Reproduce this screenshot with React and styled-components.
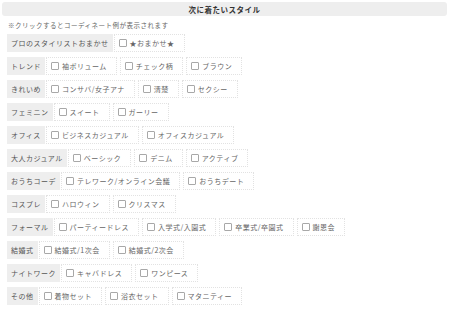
import React from "react";
import styled, { createGlobalStyle } from "styled-components";

const Global = createGlobalStyle`
  body {
    margin: 0;
    background: #fff;
    font-family: "Noto Sans CJK JP", "Noto Sans", sans-serif;
  }
`;

const Page = styled.div`
  padding: 2px 3px 0 2px;
`;

const Title = styled.div`
  height: 14px;
  background: #eeeeee;
  border-radius: 3px;
  display: flex;
  align-items: center;
  justify-content: center;
  font-size: 7.5px;
  font-weight: bold;
  letter-spacing: 0.5px;
  color: #333;
`;

const Note = styled.p`
  margin: 4px 0 0 6px;
  font-size: 6.5px;
  line-height: 10px;
  letter-spacing: 0.5px;
  color: #666;
`;

const List = styled.div`
  display: flex;
  flex-direction: column;
  gap: 5px;
  margin: 4px 0 0 5px;
`;

const Row = styled.div`
  display: flex;
  height: 18px;
  gap: 2px;
`;

const Label = styled.div`
  display: flex;
  align-items: center;
  background: #eeeeee;
  padding: 0 4px;
  margin-right: -1px;
  font-size: 7px;
  letter-spacing: 0.5px;
  color: #555;
  white-space: nowrap;
`;

const Item = styled.label`
  display: flex;
  align-items: center;
  gap: 3px;
  box-sizing: border-box;
  border: 1px dotted #e2e2e2;
  padding: 0 9px 0 4px;
  margin-right: 1px;
  font-size: 7px;
  letter-spacing: 0.5px;
  color: #666;
  white-space: nowrap;
  cursor: pointer;
`;

const Box = styled.span`
  display: inline-block;
  width: 8px;
  height: 8px;
  box-sizing: border-box;
  border: 1px solid #a8a8a8;
  border-radius: 1px;
  background: #fff;
  flex: none;
`;

const data = [
  ["プロのスタイリストおまかせ", ["★おまかせ★"]],
  ["トレンド", ["袖ボリューム", "チェック柄", "ブラウン"]],
  ["きれいめ", ["コンサバ/女子アナ", "清楚", "セクシー"]],
  ["フェミニン", ["スイート", "ガーリー"]],
  ["オフィス", ["ビジネスカジュアル", "オフィスカジュアル"]],
  ["大人カジュアル", ["ベーシック", "デニム", "アクティブ"]],
  ["おうちコーデ", ["テレワーク/オンライン会議", "おうちデート"]],
  ["コスプレ", ["ハロウィン", "クリスマス"]],
  ["フォーマル", ["パーティードレス", "入学式/入園式", "卒業式/卒園式", "謝恩会"]],
  ["結婚式", ["結婚式/1次会", "結婚式/2次会"]],
  ["ナイトワーク", ["キャバドレス", "ワンピース"]],
  ["その他", ["着物セット", "浴衣セット", "マタニティー"]],
];

export default function App() {
  return (
    <Page>
      <Global />
      <Title>次に着たいスタイル</Title>
      <Note>※クリックするとコーディネート例が表示されます</Note>
      <List>
        {data.map(([label, items]) => (
          <Row key={label}>
            <Label>{label}</Label>
            {items.map((it) => (
              <Item key={it}>
                <Box />
                {it}
              </Item>
            ))}
          </Row>
        ))}
      </List>
    </Page>
  );
}
